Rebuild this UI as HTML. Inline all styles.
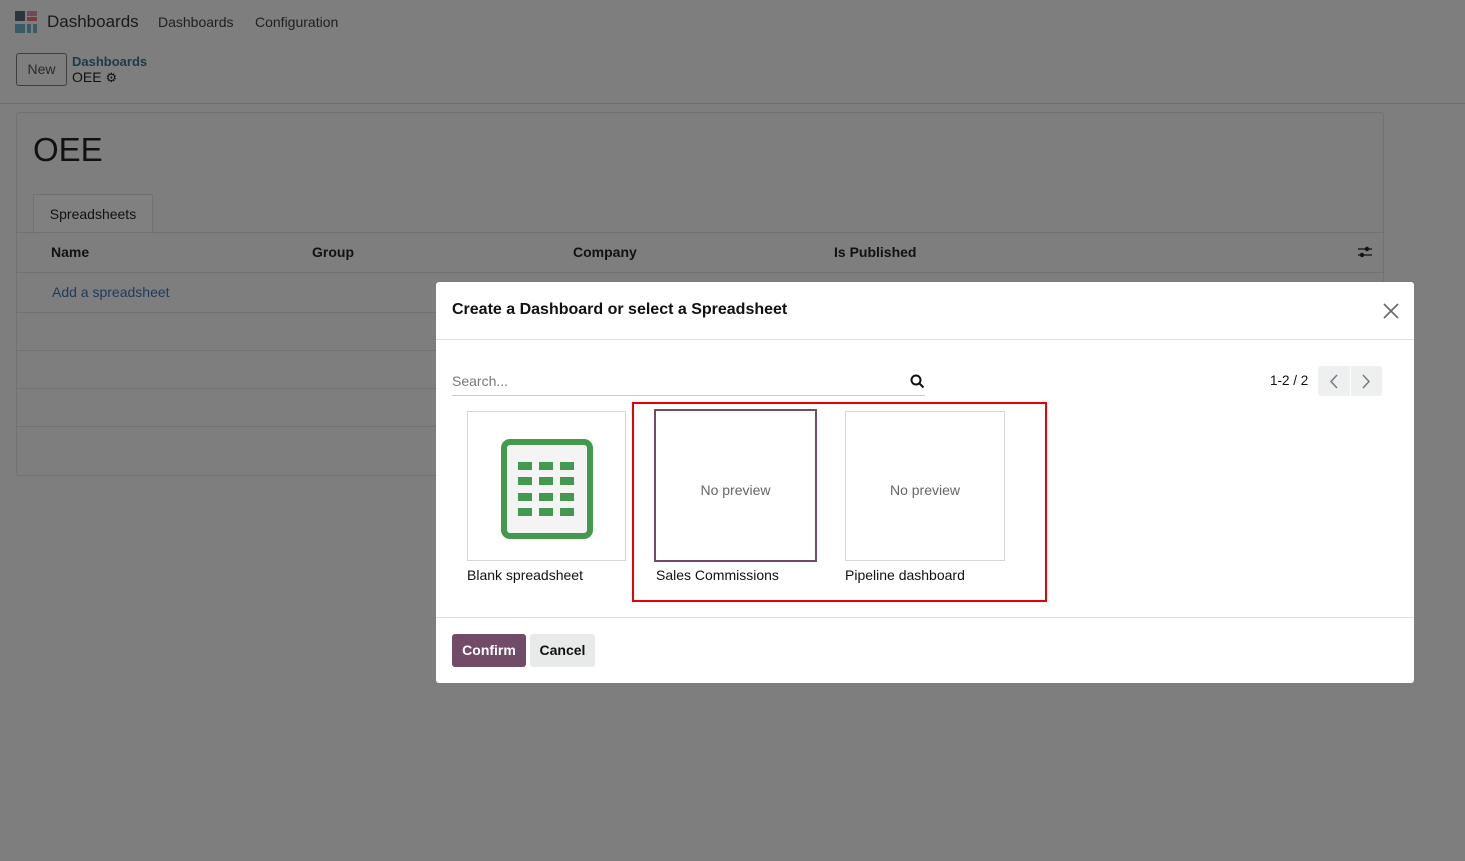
<!DOCTYPE html>
<html><head><meta charset="utf-8"><style>
*{box-sizing:border-box;margin:0;padding:0}
body{width:1465px;height:861px;overflow:hidden;background:#7e7e7e;font-family:"Liberation Sans","DejaVu Sans",sans-serif;color:#111;position:relative;font-size:14px}
.a{position:absolute}
.hl{position:absolute;left:16px;width:1368px;height:1px;background:#727272}
</style></head><body>
<div class="a" style="left:15px;top:11px;width:22px;height:22px">
<div class="a" style="left:0;top:0;width:10px;height:10px;background:#2c3440"></div>
<div class="a" style="left:12px;top:0;width:10px;height:5px;background:#6e4a5c"></div>
<div class="a" style="left:12px;top:6px;width:10px;height:4px;background:#7a3a3a"></div>
<div class="a" style="left:0;top:13px;width:10px;height:9px;background:#3a5a66"></div>
<div class="a" style="left:12px;top:13px;width:4px;height:9px;background:#3a5a66"></div>
<div class="a" style="left:18px;top:13px;width:4px;height:9px;background:#3a5a66"></div>
</div>
<div class="a" style="left:47px;top:12px;font-size:17px;color:#1a1a1a">Dashboards</div>
<div class="a" style="left:158px;top:14px;color:#1f1f1f">Dashboards</div>
<div class="a" style="left:255px;top:14px;color:#1f1f1f">Configuration</div>
<div class="a" style="left:16px;top:53px;width:51px;height:33px;border:1px solid #3e3e3e;border-radius:3px;text-align:center;line-height:31px;color:#2a2a2a">New</div>
<div class="a" style="left:72px;top:54px;font-size:13px;color:#1e3a4a;font-weight:bold">Dashboards</div>
<div class="a" style="left:72px;top:69px;color:#111">OEE <span style="font-size:13px">⚙</span></div>
<div class="a" style="left:0;top:103px;width:1465px;height:1px;background:#6e6e6e"></div>
<div class="a" style="left:16px;top:112px;width:1368px;height:364px;border:1px solid #727272;border-radius:3px"></div>
<div class="a" style="left:33px;top:131px;font-size:33px;color:#111">OEE</div>
<div class="a" style="left:33px;top:194px;width:120px;height:40px;border:1px solid #727272;border-bottom:none;background:#808080;text-align:center;line-height:38px;color:#111">Spreadsheets</div>
<div class="hl" style="top:232px"></div>
<div class="a" style="left:51px;top:244px;font-weight:bold;color:#111">Name</div>
<div class="a" style="left:312px;top:244px;font-weight:bold;color:#111">Group</div>
<div class="a" style="left:573px;top:244px;font-weight:bold;color:#111">Company</div>
<div class="a" style="left:834px;top:244px;font-weight:bold;color:#111">Is Published</div>
<svg class="a" style="left:1357px;top:245px" width="16" height="14"><path d="M1 4H15M1 10H15" stroke="#111" stroke-width="1.3"/><circle cx="10" cy="4" r="2.2" fill="#111"/><circle cx="5" cy="10" r="2.2" fill="#111"/></svg>
<div class="hl" style="top:272px"></div>
<div class="a" style="left:52px;top:284px;color:#1e3a5a">Add a spreadsheet</div>
<div class="hl" style="top:312px"></div>
<div class="hl" style="top:350px"></div>
<div class="hl" style="top:388px"></div>
<div class="hl" style="top:426px"></div>
<div class="a" style="left:436px;top:282px;width:978px;height:401px;background:#fff;border-radius:3px">
<div class="a" style="left:16px;top:19px;font-size:16px;font-weight:bold;color:#111">Create a Dashboard or select a Spreadsheet</div>
<svg class="a" style="left:947px;top:21px" width="16" height="16"><path d="M1 1L15 15M15 1L1 15" stroke="#666" stroke-width="1.6"/></svg>
<div class="a" style="left:0;top:57px;width:978px;height:1px;background:#ddd"></div>
<div class="a" style="left:16px;top:91px;color:#777">Search...</div>
<svg class="a" style="left:474px;top:92px" width="15" height="15"><circle cx="6" cy="6" r="4.5" stroke="#111" stroke-width="2" fill="none"/><path d="M9.5 9.5L13.5 13.5" stroke="#111" stroke-width="2"/></svg>
<div class="a" style="left:16px;top:113px;width:473px;height:1px;background:#ccc"></div>
<div class="a" style="left:834px;top:91px;color:#111;font-size:13.5px">1-2 / 2</div>
<div class="a" style="left:882px;top:84px;width:64px;height:30px;background:#eef0f0;border-radius:3px"></div>
<div class="a" style="left:914px;top:84px;width:1px;height:30px;background:#fff"></div>
<svg class="a" style="left:892px;top:92px" width="12" height="15"><path d="M9 1L3 7.5L9 14" stroke="#778" stroke-width="1.5" fill="none"/></svg>
<svg class="a" style="left:924px;top:92px" width="12" height="15"><path d="M3 1L9 7.5L3 14" stroke="#778" stroke-width="1.5" fill="none"/></svg>
<div class="a" style="left:31px;top:129px;width:159px;height:150px;border:1px solid #d4d8d8"></div>
<div class="a" style="left:65px;top:157px;width:92px;height:100px;border:6px solid #439a4e;border-radius:9px;background:#f4f4f4"></div>
<svg class="a" style="left:82px;top:180px" width="60" height="56">
<g fill="#439a4e">
<rect x="0" y="0" width="14" height="8"/><rect x="21" y="0" width="14" height="8"/><rect x="42" y="0" width="14" height="8"/>
<rect x="0" y="15" width="14" height="8"/><rect x="21" y="15" width="14" height="8"/><rect x="42" y="15" width="14" height="8"/>
<rect x="0" y="31" width="14" height="8"/><rect x="21" y="31" width="14" height="8"/><rect x="42" y="31" width="14" height="8"/>
<rect x="0" y="46" width="14" height="8"/><rect x="21" y="46" width="14" height="8"/><rect x="42" y="46" width="14" height="8"/>
</g></svg>
<div class="a" style="left:31px;top:285px;color:#111">Blank spreadsheet</div>
<div class="a" style="left:196px;top:120px;width:415px;height:200px;border:2px solid #e00"></div>
<div class="a" style="left:218px;top:127px;width:163px;height:153px;border:2px solid #714b67;text-align:center;line-height:159px;color:#666">No preview</div>
<div class="a" style="left:220px;top:285px;color:#111">Sales Commissions</div>
<div class="a" style="left:409px;top:129px;width:160px;height:150px;border:1px solid #d4d8d8;text-align:center;line-height:156px;color:#666">No preview</div>
<div class="a" style="left:409px;top:285px;color:#111">Pipeline dashboard</div>
<div class="a" style="left:0;top:335px;width:978px;height:1px;background:#ddd"></div>
<div class="a" style="left:16px;top:352px;width:74px;height:33px;background:#714b67;border-radius:3px;color:#fff;font-weight:bold;text-align:center;line-height:33px">Confirm</div>
<div class="a" style="left:94px;top:352px;width:65px;height:33px;background:#e8eaea;border-radius:3px;color:#111;font-weight:bold;text-align:center;line-height:33px">Cancel</div>
</div>
</body></html>
